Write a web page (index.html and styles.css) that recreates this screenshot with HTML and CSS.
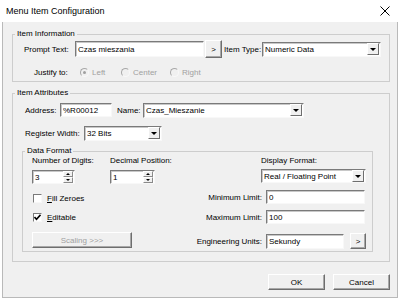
FILE: index.html
```html
<!DOCTYPE html>
<html lang="en">
<head>
    <meta charset="UTF-8">
    <title>Menu Item Configuration</title>
    <link rel="stylesheet" href="styles.css">
</head>
<body>

    <div class="window">
        <div class="titlebar">
            <span class="title">Menu Item Configuration</span>
            <svg class="close" width="10" height="10" viewBox="0 0 10 10">
                <path d="M0.5 0.5 L9.5 9.5 M9.5 0.5 L0.5 9.5" stroke="#000" stroke-width="1" fill="none"/>
            </svg>
        </div>

        <div class="client">

            <fieldset class="group">
                <legend>Item Information</legend>
                <div class="info-body">
                    <div class="row row-prompt">
                        <span class="prompt-lbl">Prompt Text:</span>
                        <input class="field prompt-field" type="text" value="Czas mieszania">
                        <button class="btn btn-more">&gt;</button>
                        <span class="type-lbl">Item Type:</span>
                        <div class="combo type-combo">
                            <span class="combo-text">Numeric Data</span>
                            <span class="combo-arrow"></span>
                        </div>
                    </div>
                    <div class="row row-justify">
                        <span class="justify-lbl">Justify to:</span>
                        <span class="radio-item r-left"><span class="radio checked"></span>Left</span>
                        <span class="radio-item r-center"><span class="radio"></span>Center</span>
                        <span class="radio-item"><span class="radio"></span>Right</span>
                    </div>
                </div>
            </fieldset>

            <fieldset class="group attr">
                <legend>Item Attributes</legend>
                <div class="attr-body">
                    <div class="row row-address">
                        <span class="address-lbl">Address:</span>
                        <input class="field address-field" type="text" value="%R00012">
                        <span class="name-lbl">Name:</span>
                        <div class="combo name-combo">
                            <span class="combo-text">Czas_Mieszanie</span>
                            <span class="combo-arrow"></span>
                        </div>
                    </div>
                    <div class="row row-register">
                        <span class="register-lbl">Register Width:</span>
                        <div class="combo register-combo">
                            <span class="combo-text">32 Bits</span>
                            <span class="combo-arrow"></span>
                        </div>
                    </div>

                    <fieldset class="group df">
                        <legend>Data Format</legend>
                        <div class="df-body">
                            <div class="df-left">
                                <div class="spin-row">
                                    <div class="spin-col digits">
                                        <div class="cap">Number of Digits:</div>
                                        <div class="spin spin-digits">
                                            <span class="spin-text">3</span>
                                            <span class="spin-btns"><span class="up"></span><span class="down"></span></span>
                                        </div>
                                    </div>
                                    <div class="spin-col">
                                        <div class="cap">Decimal Position:</div>
                                        <div class="spin spin-decimal">
                                            <span class="spin-text">1</span>
                                            <span class="spin-btns"><span class="up"></span><span class="down"></span></span>
                                        </div>
                                    </div>
                                </div>
                                <div class="check-row fill-row">
                                    <span class="check"></span>
                                    <span><u>F</u>ill Zeroes</span>
                                </div>
                                <div class="check-row edit-row">
                                    <span class="check">
                                        <svg width="7" height="7" viewBox="0 0 7 7">
                                            <path d="M0.5 3 L2.5 5.2 L6.5 0.8" stroke="#000" stroke-width="1.6" fill="none"/>
                                        </svg>
                                    </span>
                                    <span><u>E</u>ditable</span>
                                </div>
                                <button class="btn scaling" disabled>Scaling &gt;&gt;&gt;</button>
                            </div>

                            <div class="df-right">
                                <div class="display-block">
                                    <div class="cap">Display Format:</div>
                                    <div class="combo display-combo">
                                        <span class="combo-text">Real / Floating Point</span>
                                        <span class="combo-arrow"></span>
                                    </div>
                                </div>
                                <div class="limit-row min-row">
                                    <span class="limit-lbl">Minimum Limit:</span>
                                    <input class="field limit-field" type="text" value="0">
                                </div>
                                <div class="limit-row max-row">
                                    <span class="limit-lbl">Maximum Limit:</span>
                                    <input class="field limit-field" type="text" value="100">
                                </div>
                                <div class="limit-row eng-row">
                                    <span class="limit-lbl">Engineering Units:</span>
                                    <input class="field eng-field" type="text" value="Sekundy">
                                    <button class="btn btn-eng">&gt;</button>
                                </div>
                            </div>
                        </div>
                    </fieldset>
                </div>
            </fieldset>

            <div class="actions">
                <button class="btn action">OK</button>
                <button class="btn action">Cancel</button>
            </div>

        </div>
    </div>

</body>
</html>
```

FILE: styles.css
```css
body {
    margin: 0;
    font-family: "Liberation Sans", Arial, sans-serif;
    font-size: 8px;
    color: #000;
}

.window {
    width: 400px;
    height: 300px;
    background-color: #fff;
}

.titlebar {
    height: 22px;
    display: flex;
    align-items: center;
    justify-content: space-between;
    padding: 0 10px 0 6px;
    font-size: 9px;
}

.client {
    height: 276px;
    margin: 0 2px;
    padding: 7px 7px 0 9px;
    border: 1px solid #b9b9b9;
    border-top: none;
    background-color: #f0f0f0;
    box-sizing: border-box;
}

/* group boxes */
.group {
    margin: 0;
    padding: 0;
    border: 1px solid #cdcdcd;
    min-width: 0;
}

.group legend {
    margin-left: 2px;
    padding: 0 2px;
    line-height: 10px;
}

.row {
    display: flex;
    align-items: center;
}

/* item information */
.info-body {
    padding: 1px 8px 1px 11px;
}

.row-prompt {
    height: 18px;
}

.prompt-lbl {
    width: 51px;
}

.type-lbl {
    width: 38px;
    margin-left: 2px;
}

.type-combo {
    flex: 1;
}

.row-justify {
    height: 16px;
    margin-top: 6px;
    padding-left: 10px;
    color: #a0a0a0;
}

.justify-lbl {
    width: 46px;
    color: #000;
}

.radio-item {
    display: flex;
    align-items: center;
    gap: 3px;
}

.r-left {
    width: 41px;
}

.r-center {
    width: 49px;
}

.radio {
    width: 7px;
    height: 7px;
    border: 1px solid;
    border-color: #a8a8a8 #f8f8f8 #f8f8f8 #a8a8a8;
    border-radius: 50%;
    background-color: #f0f0f0;
    display: flex;
    align-items: center;
    justify-content: center;
}

.radio.checked::after {
    content: "";
    width: 3px;
    height: 3px;
    border-radius: 50%;
    background-color: #a0a0a0;
}

/* fields */
.field,
.combo,
.spin {
    height: 15px;
    border: 1px solid;
    border-color: #7a7a7a #f8f8f8 #f8f8f8 #7a7a7a;
    box-shadow: inset 1px 1px 0 #c8c8c8;
    background-color: #fff;
    box-sizing: border-box;
}

.field {
    padding: 0 2px;
    margin: 0;
    font-family: inherit;
    font-size: 8px;
    color: #000;
    outline: none;
}

.prompt-field {
    width: 129px;
    height: 16px;
}

.combo {
    display: flex;
    align-items: center;
    padding: 0 1px 0 2px;
}

.combo-text {
    flex: 1;
    white-space: nowrap;
    overflow: hidden;
}

.combo-arrow {
    width: 10px;
    height: 10px;
    border: 1px solid;
    border-color: #fff #6e6e6e #6e6e6e #fff;
    background-color: #f0f0f0;
    display: flex;
    align-items: center;
    justify-content: center;
}

.combo-arrow::after {
    content: "";
    border-top: 3px solid #000;
    border-left: 3px solid transparent;
    border-right: 3px solid transparent;
}

/* buttons */
.btn {
    margin: 0;
    padding: 0;
    border: 1px solid;
    border-color: #fff #6e6e6e #6e6e6e #fff;
    box-shadow: inset -1px -1px 0 #a8a8a8;
    background-color: #f0f0f0;
    font-family: inherit;
    font-size: 8px;
    color: #000;
}

.btn-more {
    width: 17px;
    height: 18px;
    margin-left: 1px;
}

/* item attributes */
.attr {
    margin-top: 6px;
}

.attr-body {
    padding: 5px 16px 9px 9px;
}

.row-address {
    height: 14px;
    padding-left: 3px;
}

.address-lbl {
    width: 35px;
}

.address-field {
    width: 52px;
    height: 14px;
}

.name-lbl {
    width: 26px;
    margin-left: 5px;
}

.name-combo {
    width: 161px;
}

.row-register {
    height: 14px;
    margin-top: 9px;
    padding-left: 3px;
}

.register-lbl {
    width: 59px;
}

.register-combo {
    width: 78px;
}

/* data format */
.df {
    margin-top: 6px;
}

.df-body {
    display: flex;
    padding: 0 5px 2px 9px;
}

.df-left {
    width: 161px;
}

.cap {
    line-height: 10px;
}

.spin-row {
    display: flex;
}

.digits {
    width: 78px;
}

.spin {
    display: flex;
    align-items: center;
    height: 14px;
    margin-top: 4px;
    padding-left: 2px;
}

.spin-digits {
    width: 43px;
}

.spin-decimal {
    width: 45px;
}

.spin-text {
    flex: 1;
}

.spin-btns {
    display: flex;
    flex-direction: column;
    width: 10px;
    height: 12px;
    margin-right: 1px;
}

.spin-btns span {
    flex: 1;
    border: 1px solid;
    border-color: #fff #8a8a8a #8a8a8a #fff;
    background-color: #f0f0f0;
    display: flex;
    align-items: center;
    justify-content: center;
}

.spin-btns .up::after {
    content: "";
    border-bottom: 2px solid #000;
    border-left: 2px solid transparent;
    border-right: 2px solid transparent;
}

.spin-btns .down::after {
    content: "";
    border-top: 2px solid #000;
    border-left: 2px solid transparent;
    border-right: 2px solid transparent;
}

.check-row {
    display: flex;
    align-items: center;
    gap: 5px;
    height: 10px;
    padding-left: 1px;
}

.fill-row {
    margin-top: 9px;
}

.edit-row {
    margin-top: 9px;
}

.check {
    width: 9px;
    height: 9px;
    border: 1px solid;
    border-color: #7a7a7a #f8f8f8 #f8f8f8 #7a7a7a;
    background-color: #fff;
    box-sizing: border-box;
    display: flex;
    align-items: center;
    justify-content: center;
}

.scaling {
    width: 100px;
    height: 16px;
    margin-top: 10px;
    color: #a0a0a0;
}

.df-right {
    flex: 1;
}

.display-block {
    padding-left: 68px;
}

.display-combo {
    width: 105px;
    height: 14px;
    margin-top: 3px;
}

.limit-row {
    display: flex;
    align-items: center;
}

.limit-lbl {
    width: 69px;
    margin-right: 4px;
    text-align: right;
    white-space: nowrap;
}

.limit-field {
    width: 99px;
    height: 14px;
}

.min-row {
    margin-top: 7px;
}

.max-row {
    margin-top: 6px;
}

.eng-row {
    margin-top: 9px;
}

.eng-field {
    width: 78px;
    height: 15px;
}

.btn-eng {
    width: 16px;
    height: 16px;
    margin-left: 6px;
}

/* dialog buttons */
.actions {
    display: flex;
    justify-content: flex-end;
    gap: 8px;
    margin-top: 12px;
}

.action {
    width: 57px;
    height: 16px;
}
```
